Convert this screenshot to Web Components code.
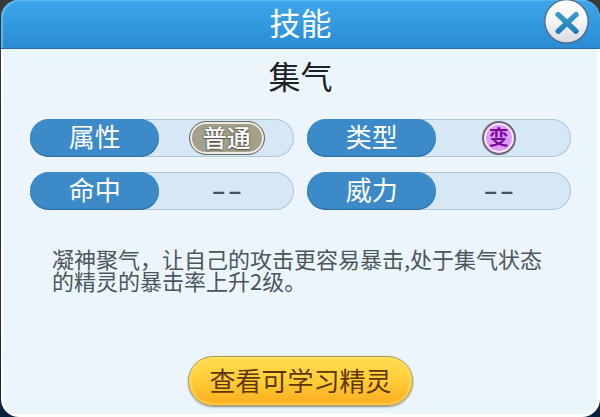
<!DOCTYPE html>
<html lang="zh-CN">
<head>
  <meta charset="utf-8">
  <meta name="viewport" content="width=device-width, initial-scale=1">
  <title>技能</title>
  <style>
    body {
      margin: 0;
      background: linear-gradient(#3a3a38, #22303c 30%, #2c3038 75%, #04233f);
      font-family: "Noto Sans CJK SC", sans-serif;
    }
  </style>
</head>
<body>
  <skill-dialog heading="技能">
    <skill-name>集气</skill-name>
    <stat-grid>
      <stat-pill label="属性"><type-badge>普通</type-badge></stat-pill>
      <stat-pill label="类型" class="shifted"><type-badge kind="status">变</type-badge></stat-pill>
      <stat-pill label="命中">--</stat-pill>
      <stat-pill label="威力" class="shifted">--</stat-pill>
    </stat-grid>
    <skill-text>凝神聚气，让自己的攻击更容易暴击,处于集气状态的精灵的暴击率上升2级。</skill-text>
    <gold-button slot="action">查看可学习精灵</gold-button>
  </skill-dialog>

  <script>
    class SkillDialog extends HTMLElement {
      constructor() {
        super();
        this.shadowDOM = this.attachShadow({ mode: "open" });
      }

      connectedCallback() {
        this.render();
      }

      render() {
        this.shadowDOM.innerHTML = `
          <style>
            * {
              box-sizing: border-box;
              margin: 0;
            }
            :host {
              display: block;
              padding-left: 1px;
            }
            section {
              display: flex;
              flex-direction: column;
              min-height: 100vh;
              border-radius: 18px;
              background: white;
            }
            header {
              display: grid;
              grid-template-columns: 1fr auto 1fr;
              align-items: start;
              height: 49px;
              padding: 0 11px;
              border-bottom: 1px solid #2b6da6;
              border-radius: 18px 18px 0 0;
              background: linear-gradient(#3da5e8, #3399df 55%, #2c8ad2);
              box-shadow: inset 2px 1px 1px #5ab8ee;
            }
            h1 {
              grid-column: 2;
              font-size: 31px;
              font-weight: 400;
              line-height: 44px;
              color: white;
            }
            close-button {
              justify-self: end;
            }
            main {
              flex: 1;
              display: flex;
              flex-direction: column;
              margin: 0 3px 3px 2px;
              padding: 6px 26px 8px 27px;
              border-radius: 0 0 16px 16px;
              background: #ebf5fb;
              box-shadow: inset 0 0 10px #e6f8fa;
            }
            footer {
              margin-top: auto;
              display: flex;
              justify-content: center;
            }
          </style>
          <section>
            <header>
              <h1></h1>
              <close-button></close-button>
            </header>
            <main>
              <slot></slot>
              <footer><slot name="action"></slot></footer>
            </main>
          </section>
        `;
        this.shadowDOM.querySelector("h1").textContent = this.getAttribute("heading");
      }
    }

    class CloseButton extends HTMLElement {
      constructor() {
        super();
        this.shadowDOM = this.attachShadow({ mode: "open" });
      }

      connectedCallback() {
        this.shadowDOM.innerHTML = `
          <style>
            :host {
              display: block;
            }
            button {
              display: block;
              width: 45px;
              height: 44px;
              padding: 0;
              border: 0;
              background: none;
              cursor: pointer;
            }
            svg {
              display: block;
            }
          </style>
          <button type="button" aria-label="关闭">
            <svg width="45" height="44" viewBox="0 0 45 44">
              <defs>
                <linearGradient id="disc" x1="0" y1="0" x2="0" y2="1">
                  <stop offset="0" stop-color="#ffffff"/>
                  <stop offset="0.5" stop-color="#f4f4f6"/>
                  <stop offset="1" stop-color="#d9dbe2"/>
                </linearGradient>
                <linearGradient id="cross" gradientUnits="userSpaceOnUse" x1="0" y1="12" x2="0" y2="34">
                  <stop offset="0" stop-color="#38a0cc"/>
                  <stop offset="1" stop-color="#1f78b4"/>
                </linearGradient>
              </defs>
              <circle cx="22.5" cy="21.3" r="21.7" fill="url(#disc)" stroke="#4c6e8c" stroke-width="1.4"/>
              <path d="M14.2 14.6 L32 31.2 M32 14.6 L14.2 31.2" fill="none" stroke="url(#cross)" stroke-width="5.4" stroke-linecap="round"/>
            </svg>
          </button>
        `;
      }
    }

    class SkillName extends HTMLElement {
      constructor() {
        super();
        this.attachShadow({ mode: "open" }).innerHTML = `
          <style>
            :host {
              display: block;
              text-align: center;
            }
            h2 {
              margin: 0;
              font-size: 32px;
              font-weight: 400;
              line-height: 40px;
              color: #1e2224;
            }
          </style>
          <h2><slot></slot></h2>
        `;
      }
    }

    class StatGrid extends HTMLElement {
      constructor() {
        super();
        this.attachShadow({ mode: "open" }).innerHTML = `
          <style>
            :host {
              display: grid;
              grid-template-columns: 1fr 1fr;
              gap: 15px 13px;
              margin-top: 24px;
            }
            ::slotted(.shifted) {
              --value-pad: 10px;
            }
          </style>
          <slot></slot>
        `;
      }
    }

    class StatPill extends HTMLElement {
      constructor() {
        super();
        this.shadowDOM = this.attachShadow({ mode: "open" });
      }

      connectedCallback() {
        this.shadowDOM.innerHTML = `
          <style>
            :host {
              display: grid;
              grid-template-columns: 49% 1fr;
              box-sizing: border-box;
              height: 38px;
              border-radius: 19px;
              background: #d6e7f5;
              box-shadow: inset 0 0 0 1px #b0c4da;
            }
            .label {
              border-radius: 19px;
              background: #3c8ac8;
              box-shadow: inset 0 -1px 1px #2d6a9c;
              color: white;
              font-size: 26px;
              line-height: 34px;
              text-align: center;
            }
            .value {
              display: flex;
              align-items: center;
              justify-content: center;
              padding-right: var(--value-pad, 0);
              font-family: Inter, sans-serif;
              font-size: 36px;
              font-weight: 300;
              line-height: 34px;
              color: #46545a;
            }
          </style>
          <span class="label"></span>
          <span class="value"><slot></slot></span>
        `;
        this.shadowDOM.querySelector(".label").textContent = this.getAttribute("label");
      }
    }

    class TypeBadge extends HTMLElement {
      constructor() {
        super();
        this.attachShadow({ mode: "open" }).innerHTML = `
          <style>
            :host {
              display: block;
              box-sizing: border-box;
              height: 34px;
              padding: 0 13px;
              border: 1px solid #6c6b68;
              border-radius: 17px;
              background: #a5a08c;
              box-shadow: inset 0 0 0 2px #eceae2;
              color: white;
              font-family: "Noto Sans CJK SC", sans-serif;
              font-size: 24px;
              font-weight: 500;
              line-height: 30px;
              text-shadow: 0 0 2px #44423a, 0 1px 1px #5a574c;
            }
            :host([kind="status"]) {
              width: 34px;
              padding: 0;
              border: 2px solid #74697a;
              background: #e19bfb;
              box-shadow: inset 0 0 0 2px #fbeefe;
              color: #7a0c9c;
              font-size: 20px;
              font-weight: 700;
              line-height: 28px;
              text-align: center;
              text-shadow: none;
            }
          </style>
          <slot></slot>
        `;
      }
    }

    class SkillText extends HTMLElement {
      constructor() {
        super();
        this.attachShadow({ mode: "open" }).innerHTML = `
          <style>
            :host {
              display: block;
              margin-top: 37px;
              padding: 0 20px 0 22px;
              color: #4b565c;
            }
            p {
              margin: 0;
              font-size: 22px;
              line-height: 22px;
            }
          </style>
          <p><slot></slot></p>
        `;
      }
    }

    class GoldButton extends HTMLElement {
      constructor() {
        super();
        this.attachShadow({ mode: "open" }).innerHTML = `
          <style>
            :host {
              display: block;
            }
            button {
              display: block;
              height: 50px;
              padding: 0 20px 3px;
              border: 1px solid #b09a50;
              border-radius: 25px;
              background: linear-gradient(#ffdc50, #ffcd38 50%, #fdab1c);
              box-shadow: inset 0 0 3px 1px #ffe470, 0 1px 2px #8a8f90;
              color: #5f3606;
              font-family: inherit;
              font-size: 26px;
              line-height: 44px;
              cursor: pointer;
            }
          </style>
          <button type="button"><slot></slot></button>
        `;
      }
    }

    customElements.define("close-button", CloseButton);
    customElements.define("skill-name", SkillName);
    customElements.define("stat-grid", StatGrid);
    customElements.define("stat-pill", StatPill);
    customElements.define("type-badge", TypeBadge);
    customElements.define("skill-text", SkillText);
    customElements.define("gold-button", GoldButton);
    customElements.define("skill-dialog", SkillDialog);
  </script>
</body>
</html>
